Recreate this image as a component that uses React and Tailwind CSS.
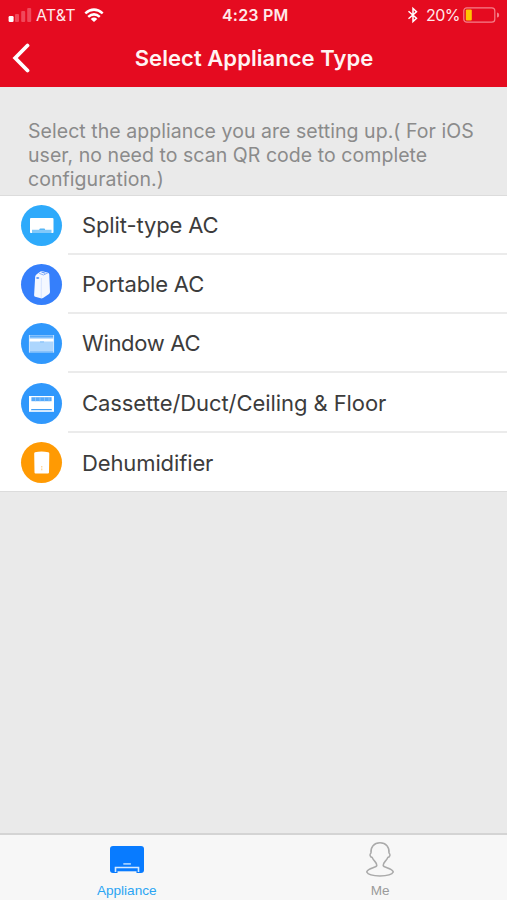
import React from "react";

const rows = [
  { label: "Split-type AC", height: "h-[59px]", tracking: "tracking-[-0.12px]", color: "bg-[#2eaafb]", icon: SplitIcon },
  { label: "Portable AC", height: "h-[59px]", tracking: "tracking-[-0.15px]", color: "bg-[#357ffb]", icon: PortableIcon },
  { label: "Window AC", height: "h-[59px]", tracking: "tracking-[-0.3px]", color: "bg-[#3098fc]", icon: WindowIcon },
  { label: "Cassette/Duct/Ceiling & Floor", height: "h-[60px]", tracking: "tracking-[-0.07px]", color: "bg-[#3098fc]", icon: CassetteIcon },
  { label: "Dehumidifier", height: "h-[58px]", tracking: "tracking-[-0.12px]", color: "bg-[#ff9a03]", icon: DehumidifierIcon },
];

function SplitIcon() {
  return (
    <svg viewBox="0 0 41 41" className="size-[41px]">
      <path d="M10 13h21.500q1 0 1 1v13.200q0 .8-.8.8H9.800q-.8 0-.8-.8V14q0-1 1-1z" fill="#fff" />
      <path d="M11 28v-3.200h7.200l1-1.300h4l1 1.300h6.300V28z" fill="#82c9fa" />
      <path d="M18.500 24.300h5.500" stroke="#4bb2f5" strokeWidth="1" />
    </svg>
  );
}

function PortableIcon() {
  return (
    <svg viewBox="0 0 41 41" className="size-[41px]">
      <path d="M14.200 12.500q.2-1.500 1.800-2.600l3.500-2.300q1-.6 2-.3l5.500 1.400q1.300.4 1.300 1.800l.7 17.500q0 1.200-1 1.900l-6 4q-1 .7-2.200.4l-5.600-1.500q-1.200-.3-1.100-1.700z" fill="#f4f8ff" />
      <path d="M18.200 9.300 22.500 11l4.500-2.200" fill="none" stroke="#8cb3fb" strokeWidth="1" />
      <path d="m20.500 8 3.800 1.200" stroke="#5c95f8" strokeWidth="1.200" />
      <path d="m20.400 14-.2 20" stroke="#cfe0ff" strokeWidth=".8" />
      <ellipse cx="16.700" cy="14" rx="1.600" ry="1" fill="#649bfb" />
    </svg>
  );
}

function WindowIcon() {
  return (
    <svg viewBox="0 0 41 41" className="size-[41px]">
      <path d="M8 12h25v17.500H8z" fill="#add6fd" />
      <path d="M8.500 13.500h24" stroke="#58abfb" strokeWidth="2" />
      <path d="M8 15.800h25v2.700H8z" fill="#fff" />
      <path d="M19 18.900h4" stroke="#71b8fb" strokeWidth=".8" />
      <path d="M8.500 28.800h24" stroke="#7dbdfb" strokeWidth="1.200" />
      <path d="M8.400 12v17.500M32.600 12v17.500" stroke="#d5eaff" strokeWidth=".8" />
    </svg>
  );
}

function CassetteIcon() {
  return (
    <svg viewBox="0 0 41 41" className="size-[41px]">
      <path d="M8 13h25v15.800H8z" fill="#fff" />
      <path d="M10.400 14.200h20.200v4H10.400z" fill="#55a9fa" />
      <path d="M14.500 14v4.200M19 14v4.200M23.500 14v4.200M28 14v4.200" stroke="#8dc6fc" strokeWidth=".8" />
      <path d="M10.500 26h20l.7 1.300H9.800z" fill="#45a0f5" />
    </svg>
  );
}

function DehumidifierIcon() {
  return (
    <svg viewBox="0 0 41 41" className="size-[41px]">
      <path d="M14 10.200q6.500-1.200 13.300 0 1 .2 1 1.200l-.3 19q-.1 1-1 1H14.500q-1 0-1-1l-.3-19q0-1 .8-1.200z" fill="#fff" />
      <path d="M20.800 24v1.500m0 1v1.800" stroke="#ffc878" strokeWidth="1" />
    </svg>
  );
}

function SignalIcon() {
  return (
    <svg viewBox="0 0 24 14" className="h-[14px] w-[24px]">
      <rect x=".6" y="8" width="5" height="6" rx="1.200" fill="#fff" />
      <g fill="#f0485a">
        <rect x="7" y="6" width="4" height="8" rx="1" />
        <rect x="13.200" y="3" width="4" height="11" rx="1" />
        <rect x="19.200" y="0" width="4" height="14" rx="1" />
      </g>
    </svg>
  );
}

function WifiIcon() {
  return (
    <svg viewBox="0 0 20 14" className="h-[14px] w-[20px]" fill="none" stroke="#fff">
      <path d="M1.300 5.400Q10-2.200 18.700 5.400" strokeWidth="2.500" />
      <path d="M4.200 8.900q5.800-5 11.600 0" strokeWidth="2.500" />
      <path d="M10 14 6.700 11q3.300-2.800 6.600 0z" fill="#fff" stroke="none" />
    </svg>
  );
}

function StatusBar() {
  return (
    <div className="flex h-[30px] items-center pl-2 pr-[7px] text-[16px] text-[#ffe9ea]">
      <div className="flex w-[214px] items-center">
        <SignalIcon />
        <span className="ml-[4px] w-[40px] whitespace-nowrap tracking-[0.1px]">AT&amp;T</span>
        <span className="ml-[8px]"><WifiIcon /></span>
      </div>
      <span className="whitespace-nowrap font-semibold tracking-[0.2px]">4:23 PM</span>
      <div className="ml-auto flex items-center">
        <svg viewBox="0 0 12 18" className="h-[18px] w-[12px]" fill="none" stroke="#fff" strokeWidth="1.500">
          <path d="m1.500 5.200 8 7L6 15.500v-13l3.500 3.300-8 7" />
        </svg>
        <span className="ml-[7px] w-[35px] whitespace-nowrap tracking-[-0.5px]">20%</span>
        <svg viewBox="0 0 37 16" className="ml-[2px] h-[16px] w-[37px]">
          <rect x=".8" y=".8" width="31" height="14.400" rx="3" fill="none" stroke="#f5808a" strokeWidth="1.200" />
          <rect x="2.800" y="2.600" width="6" height="10.800" rx="1" fill="#ffc600" />
          <path d="M34 5.500q2.200 0 2.200 2.500T34 10.500z" fill="#f5808a" />
        </svg>
      </div>
    </div>
  );
}

export default function App() {
  return (
    <div className="flex h-[900px] w-[507px] flex-col overflow-hidden bg-[#eaeaea] font-['Inter','Liberation_Sans',sans-serif]">
      <header className="h-[87px] shrink-0 bg-[#e50b20]">
        <StatusBar />
        <div className="grid h-[56px] grid-cols-[60px_1fr_60px] items-center">
          <svg viewBox="0 0 20 30" className="ml-[11px] h-[30px] w-[20px]" fill="none" stroke="#fff" strokeWidth="3.800">
            <path d="M16.500 2.500 4.200 15l12.300 12.500" strokeLinecap="round" />
          </svg>
          <h1 className="whitespace-nowrap pl-px text-center text-[22px] font-semibold tracking-[0.05px] text-[#fff3f3]">Select Appliance Type</h1>
        </div>
      </header>

      <p className="h-[108px] shrink-0 whitespace-nowrap pl-[28px] pt-[32px] text-[19.5px] leading-[24px] tracking-[0.05px] text-[#8b8b8b]">
        Select the appliance you are setting up.( For iOS<br />
        user, no need to scan QR code to complete<br />
        configuration.)
      </p>

      <ul className="h-[297px] shrink-0 border-y border-[#dcdcdc] bg-white">
        {rows.map(({ label, height, tracking, color, icon: Icon }, i) => (
          <li key={label} className={`flex items-center ${height}`}>
            <span className={`ml-[21px] flex size-[41px] shrink-0 rounded-full ${color}`}>
              <Icon />
            </span>
            <span className={`ml-[6px] flex h-full flex-1 items-center whitespace-nowrap pl-[14px] pt-[2px] text-[22px] text-[#3c3c3c] ${tracking} ${i < rows.length - 1 ? "border-b-2 border-[#ebebeb]" : ""}`}>
              {label}
            </span>
          </li>
        ))}
      </ul>

      <nav className="mt-auto grid h-[67px] shrink-0 grid-cols-2 border-t-2 border-[#d4d4d4] bg-[#f7f7f7] font-['Liberation_Sans',Arial,sans-serif] text-[13.6px] leading-[16px]">
        <div className="flex flex-col items-center pt-[10px] text-[#2ba5f3]">
          <svg viewBox="0 0 36 34" className="h-[34px] w-[36px]">
            <path d="M4 1h28q3 0 3 3v21q0 3-3 3H4q-3 0-3-3V4q0-3 3-3z" fill="#087bff" />
            <path d="M6.500 27v-4.500h23V27" fill="#087bff" stroke="#d5eaff" strokeWidth="1.600" />
            <path d="M14.300 18.900h7.600" stroke="#a6d1ff" strokeWidth="1.700" />
            <path d="M8.500 27.500h19" stroke="#f7f7f7" strokeWidth="2.400" />
          </svg>
          <span className="mt-[4px]">Appliance</span>
        </div>
        <div className="flex flex-col items-center pt-[6px] text-[#9b9b9b]">
          <svg viewBox="0 0 30 37" className="h-[37px] w-[30px]" fill="none" stroke="#aaa" strokeWidth="1.500">
            <path d="M11.800 24.500c.3-3.300-3-4-4.600-8-2.300-.6-2.900-3.300-1.200-4.500C5.400 6 9 1.800 15 1.800S24.600 6 24 12c1.700 1.200 1.100 3.900-1.200 4.500-1.600 4-4.900 4.700-4.600 8 .4 2.300 9 2.300 10.100 6.500-2.600 5.200-24 5.200-26.600 0 1.100-4.200 9.700-4.200 10.100-6.500z" />
          </svg>
          <span className="mt-[5px]">Me</span>
        </div>
      </nav>
    </div>
  );
}
